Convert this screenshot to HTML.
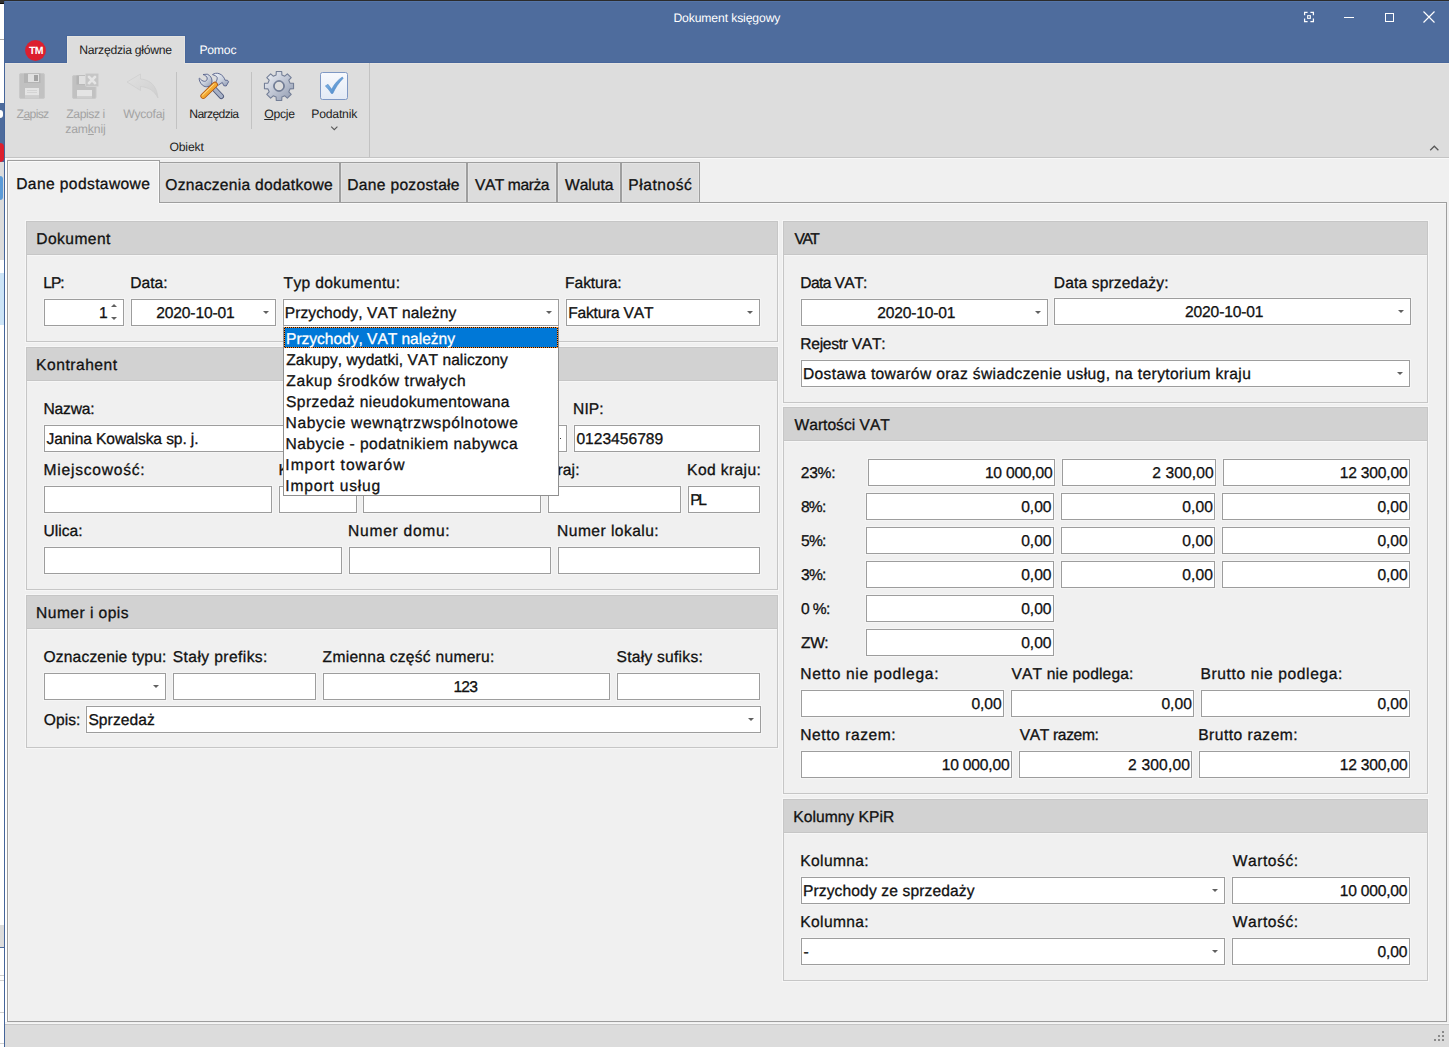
<!DOCTYPE html>
<html lang="pl">
<head>
<meta charset="utf-8">
<title>Dokument księgowy</title>
<style>
html,body{margin:0;padding:0;background:#fff}
body{width:1449px;height:1047px;overflow:hidden;position:relative;font-family:"Liberation Sans",sans-serif;font-kerning:none;text-rendering:geometricPrecision;color:#111;font-size:15.6px}
#app{position:absolute;left:0;top:0;width:1449px;height:1047px;overflow:hidden;background:#f0f0f0}
#app *{box-sizing:border-box}
.t{position:absolute;white-space:pre;line-height:1;display:block;-webkit-text-stroke:0.3px currentColor}
.abs{position:absolute}
/* background strip of the window behind */
#behind{position:absolute;left:0;top:0;width:4px;height:1047px;background:#fff}
#behind i{position:absolute;left:0;width:4px;display:block}
#topline{position:absolute;left:4px;top:0;width:1445px;height:1px;background:#2b2b2b;box-shadow:0 1px 0 #5575a8}
#winborder{position:absolute;left:4px;top:1px;width:1px;height:1046px;background:#45659a}
#title{position:absolute;left:4px;top:1px;width:1445px;height:62px;background:#4e6c9d;border-bottom:1px solid #47669b}
#ribbon{position:absolute;left:5px;top:63px;width:1444px;height:94px;background:#dddddd;border-top:1px solid #e6e4e1}
#ribbonline{position:absolute;left:5px;top:157px;width:1444px;height:2px;background:#c4c4c4;border-bottom:1px solid #f8f8f8}
#rtab{position:absolute;left:67px;top:36px;width:118px;height:28px;background:#dddddd;border:1px solid #e5e4e1;border-bottom:0;box-shadow:-1px -1px 0 #48679b,1px -1px 0 #48679b}
.vsep{position:absolute;width:1px;background:#c2c2c2}
#edgeL{position:absolute;left:5px;top:158px;width:2px;height:864px;background:#fff}
/* tab control */
#pane{position:absolute;left:7px;top:202px;width:1440px;height:820px;border:1px solid #9e9e9e;background:#f0f0f0;box-shadow:inset 1px 1px 0 #f9f9f9}
.tab{position:absolute;top:162px;height:40px;border:1px solid #9e9e9e;border-bottom:0;background:#dcdcdc;box-shadow:inset 1px 1px 0 #e3e3e3,inset -1px 0 0 #e3e3e3}
#tab0{left:7px;top:160px;width:153px;height:43px;background:#f0f0f0;border:1px solid #9e9e9e;border-bottom:0;position:absolute;box-shadow:inset 1px 1px 0 #fafafa,inset -1px 0 0 #fafafa}
/* panels */
.panel{position:absolute;border:1px solid #c6c6c6;background:#f0f0f0;box-shadow:0 0 0 1px #f6f6f6}
.panel header{position:absolute;left:0;top:0;right:0;height:33px;background:#d2d2d2;border-bottom:1px solid #c6c6c6;box-shadow:0 1px 0 #f6f6f6}
.in{position:absolute;background:#fff;border:1px solid #9d9d9d;box-shadow:0 0 0 1px #f5f5f5}
.arr{position:absolute;width:0;height:0;border-left:3px solid transparent;border-right:3px solid transparent;border-top:3px solid #606060}
.spu{position:absolute;width:0;height:0;border-left:3px solid transparent;border-right:3px solid transparent;border-bottom:3px solid #606060}
.spd{position:absolute;width:0;height:0;border-left:3px solid transparent;border-right:3px solid transparent;border-top:3px solid #606060}
.dd{position:absolute;background:#fff;border:1px solid #8f8f8f;border-top-color:#fff}
.dd .sel{position:absolute;left:0;top:0;width:274px;height:21px;background:#0078d7}
.dd .sel i{position:absolute;display:block}
.dd .sel .h{left:0;width:274px;height:1px;background:repeating-linear-gradient(90deg,#ff8a2a 0 1px,#101010 1px 2px)}
.dd .sel .v{top:0;width:1px;height:21px;background:repeating-linear-gradient(180deg,#ff8a2a 0 1px,#101010 1px 2px)}
#tab0::after{content:"";position:absolute;left:1px;right:0;bottom:-1px;height:1px;background:#f0f0f0}
#status{position:absolute;left:5px;top:1024px;width:1444px;height:23px;background:#dcdcdc;border-top:1px solid #c6c6c6}
#status i{position:absolute;width:2px;height:2px;background:#8a8a8a;display:block}
#statusline{position:absolute;left:5px;top:1023px;width:1444px;height:1px;background:#f7f7f7}
svg{position:absolute;overflow:visible}
</style>
</head>
<body>
<div id="app">
<div id="behind">
<i style="top:0;height:3px;background:#303030"></i><i style="top:3px;height:1px;background:#0a0a0a"></i>
<i style="top:39px;height:1px;background:#a8a8a8"></i>
<i style="top:103px;height:59px;background:#4d6b9c"></i>
<i style="top:110px;height:8px;background:#fff;border-radius:0 4px 4px 0;width:3px"></i>
<i style="top:143px;height:19px;background:#dc1f2e;border-radius:0 9px 9px 0;width:4px"></i>
<i style="top:162px;height:98px;background:#dcdcdc"></i>
<i style="top:176px;height:24px;background:#5b9bd8;border-radius:0 12px 12px 0;width:3px"></i>
<i style="top:273px;height:52px;background:#cce4f7"></i>
<i style="top:925px;height:22px;background:#dcdcdc"></i>
<i style="top:947px;height:1px;background:#4d6b9c"></i>
<i style="top:975px;height:1px;background:#d0d0d0"></i><i style="top:980px;height:1px;background:#d0d0d0"></i>
<i style="top:1012px;height:1px;background:#d0d0d0"></i><i style="top:1043px;height:1px;background:#d0d0d0"></i>
</div>
<div id="title"></div>
<div id="topline"></div>
<div id="winborder"></div>
<div id="ribbon"></div>
<div id="rtab"></div>
<div id="ribbonline"></div>
<div class="vsep" style="left:176px;top:72px;height:57px"></div>
<div class="vsep" style="left:251px;top:72px;height:57px"></div>
<div class="vsep" style="left:369px;top:63px;height:94px"></div>
<div id="edgeL"></div>
<!-- app logo -->
<svg style="left:25px;top:40px" width="21" height="21" viewBox="0 0 21 21"><circle cx="10.5" cy="10.5" r="10.4" fill="#dc1f2e"/></svg>
<!-- window buttons -->
<svg style="left:1300px;top:8px" width="140" height="20" viewBox="0 0 140 20" fill="none" stroke="#fff" stroke-width="1.2">
<path d="M4.600 7.300v-3h3M10.400 4.300h3v3M13.400 10.500v3h-3M7.600 13.500h-3v-3" stroke-width="1.250"/><rect x="7.650" y="7.650" width="2.700" height="2.700" stroke-width="1.050"/>
<path d="M44 9.500h10" stroke-width="1"/>
<rect x="85.500" y="5.500" width="8" height="8" stroke-width="1"/>
<path d="M123.5 3.500l11 11M134.500 3.500l-11 11" stroke-width="1.15"/>
</svg>
<!-- save (disabled) -->
<svg style="left:19px;top:73px" width="26" height="26" viewBox="0 0 26 26">
<rect x="0.500" y="0.500" width="25" height="25" rx="1.500" fill="#c1c1c1" stroke="#c9c9c9"/>
<rect x="5" y="0.500" width="16.500" height="9.500" fill="#b4b4b4"/>
<rect x="9" y="1" width="11" height="8" fill="#e0e0e0"/>
<rect x="15" y="2" width="4" height="6" fill="#a2a2a2"/>
<rect x="6" y="15" width="14" height="7.500" fill="#e4e4e4"/>
<rect x="6" y="22.500" width="14" height="3" fill="#cecece"/>
<path d="M8 17.500h10M8 19.500h10" stroke="#cfcfcf" stroke-width="0.800"/>
</svg>
<!-- save and close (disabled) -->
<svg style="left:72px;top:73px" width="27" height="26" viewBox="0 0 27 26">
<rect x="0.500" y="2.500" width="23.500" height="23" rx="1.500" fill="#c1c1c1" stroke="#c9c9c9"/>
<rect x="4.500" y="2.500" width="10" height="9" fill="#b4b4b4"/>
<rect x="7" y="3" width="7" height="8" fill="#e0e0e0"/>
<rect x="5" y="17" width="15" height="6.500" fill="#e4e4e4"/>
<rect x="5" y="23.500" width="15" height="2" fill="#cecece"/>
<rect x="13.500" y="0.500" width="13" height="13" rx="1" fill="#c6c6c6" stroke="#d3d3d3"/>
<path d="M17 3.900l6 6.200M23 3.900l-6 6.200" stroke="#e5e5e5" stroke-width="2.800" stroke-linecap="round"/>
</svg>
<!-- undo (disabled) -->
<svg style="left:126px;top:73px" width="33" height="26" viewBox="0 0 33 26">
<defs><linearGradient id="gu" x1="0" y1="0" x2="1" y2="1"><stop offset="0" stop-color="#e0e0e0"/><stop offset="1" stop-color="#cfcfcf"/></linearGradient></defs>
<path d="M1 9 L14.500 1 L14.500 6 C24 6.500 31 13 32 25 C28 17.500 23 14.500 14.500 13.500 L14.500 17.500 Z" fill="url(#gu)" stroke="#cdcdcd" stroke-width="0.700"/>
</svg>
<!-- tools -->
<svg style="left:198px;top:72px" width="33" height="28" viewBox="0 0 33 28">
<defs>
<linearGradient id="gm" x1="0" y1="0" x2="1" y2="1"><stop offset="0" stop-color="#f4f6fa"/><stop offset="0.55" stop-color="#c9d0dd"/><stop offset="1" stop-color="#8f9ab2"/></linearGradient>
<linearGradient id="go" x1="0" y1="0" x2="1" y2="1"><stop offset="0" stop-color="#ffe08f"/><stop offset="0.5" stop-color="#f5ab33"/><stop offset="1" stop-color="#e58a14"/></linearGradient>
</defs>
<!-- wrench handle -->
<path d="M15 15.500 L23.300 24.300" stroke="#4f5a7c" stroke-width="5.400" stroke-linecap="round"/>
<path d="M15 15.500 L23.300 24.300" stroke="#a7b1c6" stroke-width="3.600" stroke-linecap="round"/>
<!-- wrench head -->
<path d="M5 2.500 L9.300 2.200 C12.300 3.400 14 6 14 9 C14 11.800 12.800 13.600 11.300 14.200 C9.500 15 7.500 14.900 6 14.200 C3.500 13 1.500 10 1 6.500 L1.600 6.200 C3 8 4.500 9.200 6.500 9.300 C8.300 9.300 9.400 7.800 9.200 6 C9 4.500 7.200 3.300 5 2.500 Z" fill="url(#gm)" stroke="#56618a" stroke-width="0.900" stroke-linejoin="round"/>
<!-- hammer head -->
<path d="M14.500 2.600 C16.300 1.200 18.800 0.900 21 1.600 C24.300 2.700 26.300 5.500 27 8.200 L29.500 8.300 L30.600 9.800 L28.200 14 L25.800 13.700 L24.300 10.500 L20.200 13.200 L17.600 10.600 C18.600 9 19.400 7.200 19.200 5.600 C18.600 4 16.600 3.300 14.500 2.600 Z" fill="url(#gm)" stroke="#56618a" stroke-width="0.900" stroke-linejoin="round"/>
<!-- hammer handle -->
<path d="M17 12.700 L5.300 24" stroke="#b0560f" stroke-width="5.800" stroke-linecap="round"/>
<path d="M17 12.700 L5.300 24" stroke="url(#go)" stroke-width="4.200" stroke-linecap="round"/>
<path d="M15.800 12.300 L4.600 23.100" stroke="#ffe9ad" stroke-width="1" stroke-linecap="round" opacity="0.700"/>
</svg>
<!-- gear -->
<svg style="left:263px;top:70px" width="32" height="32" viewBox="-16 -16 32 32">
<defs><linearGradient id="gg" x1="0" y1="0" x2="1" y2="1"><stop offset="0" stop-color="#f3f5f9"/><stop offset="0.450" stop-color="#c5cbd8"/><stop offset="1" stop-color="#8e98ae"/></linearGradient></defs>
<path fill="url(#gg)" stroke="#737e96" stroke-width="1.100" stroke-linejoin="round" fill-rule="evenodd" d="M-2.88 -11.03 L-2.72 -14.55 L2.72 -14.55 L2.88 -11.03 L5.77 -9.83 L8.36 -12.21 L12.21 -8.36 L9.83 -5.77 L11.03 -2.88 L14.55 -2.72 L14.55 2.72 L11.03 2.88 L9.83 5.77 L12.21 8.36 L8.36 12.21 L5.77 9.83 L2.88 11.03 L2.72 14.55 L-2.72 14.55 L-2.88 11.03 L-5.77 9.83 L-8.36 12.21 L-12.21 8.36 L-9.83 5.77 L-11.03 2.88 L-14.55 2.72 L-14.55 -2.72 L-11.03 -2.88 L-9.83 -5.77 L-12.21 -8.36 L-8.36 -12.21 L-5.77 -9.83 Z M4.8 0 A4.8 4.8 0 1 0 -4.8 0 A4.8 4.8 0 1 0 4.8 0 Z"/>
<circle r="5.400" fill="none" stroke="#69748d" stroke-width="0.900"/>
</svg>
<!-- taxpayer check -->
<svg style="left:320px;top:72px" width="28" height="28" viewBox="0 0 28 28">
<defs><linearGradient id="gc" x1="0" y1="0" x2="0" y2="1"><stop offset="0" stop-color="#f7f9fd"/><stop offset="1" stop-color="#e3eaf5"/></linearGradient>
<linearGradient id="gk" x1="0" y1="0" x2="1" y2="1"><stop offset="0" stop-color="#8fc0ea"/><stop offset="1" stop-color="#3f7fc4"/></linearGradient></defs>
<rect x="0.500" y="0.500" width="27" height="27" rx="2" fill="url(#gc)" stroke="#7f98c4"/>
<path d="M5.300 14 L8 12.300 L11.700 17.300 C14.300 11.800 17.800 8 22.300 5 L23.200 6.300 C18.800 10.800 15.600 15.500 12.800 21.500 L11.300 21.500 C9.500 18.500 7.700 16.200 5.300 14 Z" fill="url(#gk)" stroke="#4a83c4" stroke-width="0.500"/>
</svg>
<!-- chevrons -->
<svg style="left:330px;top:125px" width="9" height="6" viewBox="0 0 9 6"><path d="M1.200 1.600l3.100 3L7.400 1.600" fill="none" stroke="#5a5a5a" stroke-width="1.150"/></svg>
<svg style="left:1429px;top:144px" width="11" height="8" viewBox="0 0 11 8"><path d="M1.200 6.300l4.100-4.100L9.400 6.300" fill="none" stroke="#585858" stroke-width="1.250"/></svg>

<main>
<div id="pane"></div>
<nav>
<div class="tab" style="left:158px;width:182px"></div>
<div class="tab" style="left:340px;width:127px"></div>
<div class="tab" style="left:467px;width:90px"></div>
<div class="tab" style="left:557px;width:64px"></div>
<div class="tab" style="left:621px;width:79px"></div>
<div id="tab0"></div>
</nav>
<section class="panel" style="left:26px;top:221px;width:752px;height:121px"><header></header></section>
<span class="t" style="left:36.32px;top:232px;letter-spacing:0.428px;">Dokument</span>
<section class="panel" style="left:26px;top:347px;width:752px;height:243px"><header></header></section>
<span class="t" style="left:36.12px;top:358px;letter-spacing:0.519px;">Kontrahent</span>
<section class="panel" style="left:26px;top:595px;width:752px;height:153px"><header></header></section>
<span class="t" style="left:36.12px;top:606px;letter-spacing:0.444px;">Numer i opis</span>
<section class="panel" style="left:783px;top:221px;width:645px;height:182px"><header></header></section>
<span class="t" style="left:794.53px;top:232px;letter-spacing:-2.506px;">VAT</span>
<section class="panel" style="left:783px;top:407px;width:645px;height:387px"><header></header></section>
<span class="t" style="left:794.53px;top:418px;">Wartości VAT</span>
<section class="panel" style="left:783px;top:799px;width:645px;height:182px"><header></header></section>
<span class="t" style="left:793.32px;top:810px;letter-spacing:0.030px;">Kolumny KPiR</span>
<div class="in" style="left:44px;top:299px;width:80px;height:27px"></div>
<div class="in" style="left:131px;top:299px;width:145px;height:27px"></div>
<div class="in" style="left:283px;top:299px;width:276px;height:27px"></div>
<div class="in" style="left:566px;top:299px;width:194px;height:27px"></div>
<div class="in" style="left:44px;top:425px;width:523px;height:27px"></div>
<div class="in" style="left:574px;top:425px;width:186px;height:27px"></div>
<div class="in" style="left:44px;top:486px;width:228px;height:27px"></div>
<div class="in" style="left:279px;top:486px;width:78px;height:27px"></div>
<div class="in" style="left:363px;top:486px;width:178px;height:27px"></div>
<div class="in" style="left:548px;top:486px;width:133px;height:27px"></div>
<div class="in" style="left:688px;top:486px;width:72px;height:27px"></div>
<div class="in" style="left:44px;top:547px;width:298px;height:27px"></div>
<div class="in" style="left:349px;top:547px;width:202px;height:27px"></div>
<div class="in" style="left:558px;top:547px;width:202px;height:27px"></div>
<div class="in" style="left:44px;top:673px;width:122px;height:27px"></div>
<div class="in" style="left:173px;top:673px;width:143px;height:27px"></div>
<div class="in" style="left:323px;top:673px;width:287px;height:27px"></div>
<div class="in" style="left:617px;top:673px;width:143px;height:27px"></div>
<div class="in" style="left:86px;top:706px;width:675px;height:27px"></div>
<div class="in" style="left:801px;top:299px;width:247px;height:27px"></div>
<div class="in" style="left:1054px;top:298px;width:357px;height:27px"></div>
<div class="in" style="left:801px;top:360px;width:609px;height:27px"></div>
<div class="in" style="left:868px;top:459px;width:187px;height:27px"></div>
<div class="in" style="left:1062px;top:459px;width:154px;height:27px"></div>
<div class="in" style="left:1223px;top:459px;width:187px;height:27px"></div>
<div class="in" style="left:866px;top:493px;width:188px;height:27px"></div>
<div class="in" style="left:1061px;top:493px;width:154px;height:27px"></div>
<div class="in" style="left:1222px;top:493px;width:188px;height:27px"></div>
<div class="in" style="left:866px;top:527px;width:188px;height:27px"></div>
<div class="in" style="left:1061px;top:527px;width:154px;height:27px"></div>
<div class="in" style="left:1222px;top:527px;width:188px;height:27px"></div>
<div class="in" style="left:866px;top:561px;width:188px;height:27px"></div>
<div class="in" style="left:1061px;top:561px;width:154px;height:27px"></div>
<div class="in" style="left:1222px;top:561px;width:188px;height:27px"></div>
<div class="in" style="left:866px;top:595px;width:188px;height:27px"></div>
<div class="in" style="left:866px;top:629px;width:188px;height:27px"></div>
<div class="in" style="left:801px;top:690px;width:203px;height:27px"></div>
<div class="in" style="left:1011px;top:690px;width:183px;height:27px"></div>
<div class="in" style="left:1201px;top:690px;width:209px;height:27px"></div>
<div class="in" style="left:801px;top:751px;width:211px;height:27px"></div>
<div class="in" style="left:1019px;top:751px;width:173px;height:27px"></div>
<div class="in" style="left:1199px;top:751px;width:211px;height:27px"></div>
<div class="in" style="left:801px;top:877px;width:424px;height:27px"></div>
<div class="in" style="left:1232px;top:877px;width:178px;height:27px"></div>
<div class="in" style="left:801px;top:938px;width:424px;height:27px"></div>
<div class="in" style="left:1232px;top:938px;width:178px;height:27px"></div>
<span class="t" style="left:43.32px;top:276px;letter-spacing:-1.056px;">LP:</span>
<span class="t" style="left:130.32px;top:276px;letter-spacing:-0.021px;">Data:</span>
<span class="t" style="left:283.55px;top:276px;letter-spacing:0.355px;">Typ dokumentu:</span>
<span class="t" style="left:565.12px;top:276px;letter-spacing:-0.088px;">Faktura:</span>
<span class="t" style="left:43.52px;top:402px;letter-spacing:-0.183px;">Nazwa:</span>
<span class="t" style="left:573.12px;top:402px;letter-spacing:0.022px;">NIP:</span>
<span class="t" style="left:43.52px;top:463px;letter-spacing:0.759px;">Miejscowość:</span>
<span class="t" style="left:278.52px;top:463px;">Kod pocztowy:</span>
<span class="t" style="left:362.52px;top:463px;">Poczta:</span>
<span class="t" style="left:547.12px;top:463px;letter-spacing:0.082px;">Kraj:</span>
<span class="t" style="left:687.12px;top:463px;letter-spacing:0.385px;">Kod kraju:</span>
<span class="t" style="left:43.60px;top:524px;letter-spacing:-0.016px;">Ulica:</span>
<span class="t" style="left:348.12px;top:524px;letter-spacing:0.711px;">Numer domu:</span>
<span class="t" style="left:557.12px;top:524px;letter-spacing:0.447px;">Numer lokalu:</span>
<span class="t" style="left:43.56px;top:650px;letter-spacing:0.155px;">Oznaczenie typu:</span>
<span class="t" style="left:172.79px;top:650px;letter-spacing:0.411px;">Stały prefiks:</span>
<span class="t" style="left:322.60px;top:650px;letter-spacing:0.268px;">Zmienna część numeru:</span>
<span class="t" style="left:616.49px;top:650px;letter-spacing:0.259px;">Stały sufiks:</span>
<span class="t" style="left:43.76px;top:713px;letter-spacing:0.038px;">Opis:</span>
<span class="t" style="left:800.32px;top:276px;letter-spacing:-0.607px;">Data VAT:</span>
<span class="t" style="left:1053.72px;top:276px;letter-spacing:0.149px;">Data sprzedaży:</span>
<span class="t" style="left:800.32px;top:337px;letter-spacing:-0.292px;">Rejestr VAT:</span>
<span class="t" style="left:800.82px;top:466px;letter-spacing:-0.283px;">23%:</span>
<span class="t" style="left:800.92px;top:500px;letter-spacing:-0.739px;">8%:</span>
<span class="t" style="left:800.98px;top:534px;letter-spacing:-0.766px;">5%:</span>
<span class="t" style="left:801.01px;top:568px;letter-spacing:-0.781px;">3%:</span>
<span class="t" style="left:800.99px;top:602px;letter-spacing:-0.627px;">0 %:</span>
<span class="t" style="left:801.10px;top:636px;letter-spacing:-0.484px;">ZW:</span>
<span class="t" style="left:800.32px;top:667px;letter-spacing:0.681px;">Netto nie podlega:</span>
<span class="t" style="left:1011.53px;top:667px;letter-spacing:0.147px;">VAT nie podlega:</span>
<span class="t" style="left:1200.52px;top:667px;letter-spacing:0.608px;">Brutto nie podlega:</span>
<span class="t" style="left:800.32px;top:728px;letter-spacing:0.546px;">Netto razem:</span>
<span class="t" style="left:1019.73px;top:728px;letter-spacing:-0.351px;">VAT razem:</span>
<span class="t" style="left:1198.22px;top:728px;letter-spacing:0.481px;">Brutto razem:</span>
<span class="t" style="left:800.32px;top:854px;letter-spacing:0.343px;">Kolumna:</span>
<span class="t" style="left:1232.63px;top:854px;letter-spacing:0.579px;">Wartość:</span>
<span class="t" style="left:800.32px;top:915px;letter-spacing:0.343px;">Kolumna:</span>
<span class="t" style="left:1232.63px;top:915px;letter-spacing:0.579px;">Wartość:</span>
<span class="t" style="left:99.11px;top:306px;">1</span>
<span class="t" style="left:156.22px;top:306px;letter-spacing:-0.139px;">2020-10-01</span>
<span class="t" style="left:284.72px;top:306px;letter-spacing:0.080px;">Przychody, VAT należny</span>
<span class="t" style="left:568.32px;top:306px;letter-spacing:-0.242px;">Faktura VAT</span>
<span class="t" style="left:46.56px;top:432px;letter-spacing:-0.109px;">Janina Kowalska sp. j.</span>
<span class="t" style="left:576.39px;top:432px;letter-spacing:0.010px;">0123456789</span>
<span class="t" style="left:690.22px;top:493px;letter-spacing:-2.483px;">PL</span>
<span class="t" style="left:453.41px;top:680px;letter-spacing:-0.777px;">123</span>
<span class="t" style="left:88.39px;top:713px;letter-spacing:0.083px;">Sprzedaż</span>
<span class="t" style="left:877.32px;top:306px;letter-spacing:-0.183px;">2020-10-01</span>
<span class="t" style="left:1185.02px;top:305px;letter-spacing:-0.139px;">2020-10-01</span>
<span class="t" style="left:802.92px;top:367px;letter-spacing:0.371px;">Dostawa towarów oraz świadczenie usług, na terytorium kraju</span>
<span class="t" style="left:984.91px;top:466px;letter-spacing:-0.213px;">10 000,00</span>
<span class="t" style="left:1152.22px;top:466px;letter-spacing:0.096px;">2 300,00</span>
<span class="t" style="left:1339.71px;top:466px;letter-spacing:-0.175px;">12 300,00</span>
<span class="t" style="left:1021.19px;top:500px;letter-spacing:-0.014px;">0,00</span>
<span class="t" style="left:1182.19px;top:500px;letter-spacing:0.119px;">0,00</span>
<span class="t" style="left:1377.39px;top:500px;letter-spacing:-0.014px;">0,00</span>
<span class="t" style="left:1021.19px;top:534px;letter-spacing:-0.014px;">0,00</span>
<span class="t" style="left:1182.19px;top:534px;letter-spacing:0.119px;">0,00</span>
<span class="t" style="left:1377.39px;top:534px;letter-spacing:-0.014px;">0,00</span>
<span class="t" style="left:1021.19px;top:568px;letter-spacing:-0.014px;">0,00</span>
<span class="t" style="left:1182.19px;top:568px;letter-spacing:0.119px;">0,00</span>
<span class="t" style="left:1377.39px;top:568px;letter-spacing:-0.014px;">0,00</span>
<span class="t" style="left:1021.19px;top:602px;letter-spacing:-0.014px;">0,00</span>
<span class="t" style="left:1021.19px;top:636px;letter-spacing:-0.014px;">0,00</span>
<span class="t" style="left:971.39px;top:697px;letter-spacing:-0.048px;">0,00</span>
<span class="t" style="left:1161.39px;top:697px;letter-spacing:0.052px;">0,00</span>
<span class="t" style="left:1377.39px;top:697px;letter-spacing:-0.014px;">0,00</span>
<span class="t" style="left:941.71px;top:758px;letter-spacing:-0.175px;">10 000,00</span>
<span class="t" style="left:1128.12px;top:758px;letter-spacing:0.153px;">2 300,00</span>
<span class="t" style="left:1339.71px;top:758px;letter-spacing:-0.175px;">12 300,00</span>
<span class="t" style="left:802.92px;top:884px;letter-spacing:0.126px;">Przychody ze sprzedaży</span>
<span class="t" style="left:803.51px;top:945px;">-</span>
<span class="t" style="left:1339.71px;top:884px;letter-spacing:-0.200px;">10 000,00</span>
<span class="t" style="left:1377.49px;top:945px;letter-spacing:-0.114px;">0,00</span>
<i class="arr" style="left:263px;top:311px"></i>
<i class="arr" style="left:546px;top:311px"></i>
<i class="arr" style="left:747px;top:311px"></i>
<i class="arr" style="left:153px;top:685px"></i>
<i class="arr" style="left:748px;top:718px"></i>
<i class="arr" style="left:1035px;top:311px"></i>
<i class="arr" style="left:1398px;top:310px"></i>
<i class="arr" style="left:1397px;top:372px"></i>
<i class="arr" style="left:1212px;top:889px"></i>
<i class="arr" style="left:1212px;top:950px"></i>
<i class="spu" style="left:111px;top:304px"></i><i class="spd" style="left:111px;top:317px"></i>
<i style="position:absolute;left:560px;top:438px;width:1px;height:1px;background:#333"></i>
<div class="dd" style="left:283px;top:326px;width:276px;height:170px"><div class="sel"><i class="h" style="top:0"></i><i class="h" style="top:20px"></i><i class="v" style="left:0"></i><i class="v" style="left:273px"></i></div></div>
<span class="t" style="left:286.12px;top:332px;letter-spacing:-0.049px;color:#fff;">Przychody, VAT należny</span>
<span class="t" style="left:286.30px;top:353px;letter-spacing:0.048px;">Zakupy, wydatki, VAT naliczony</span>
<span class="t" style="left:286.30px;top:374px;letter-spacing:0.580px;">Zakup środków trwałych</span>
<span class="t" style="left:286.09px;top:395px;letter-spacing:0.372px;">Sprzedaż nieudokumentowana</span>
<span class="t" style="left:285.52px;top:416px;letter-spacing:0.604px;">Nabycie wewnątrzwspólnotowe</span>
<span class="t" style="left:285.52px;top:437px;letter-spacing:0.426px;">Nabycie - podatnikiem nabywca</span>
<span class="t" style="left:285.36px;top:458px;letter-spacing:0.959px;">Import towarów</span>
<span class="t" style="left:285.36px;top:479px;letter-spacing:0.828px;">Import usług</span>
</main>
<div id="statusline"></div>
<footer id="status"><i style="left:1437px;top:6px"></i><i style="left:1433px;top:10px"></i><i style="left:1437px;top:10px"></i><i style="left:1429px;top:14px"></i><i style="left:1433px;top:14px"></i><i style="left:1437px;top:14px"></i></footer>
<span class="t" style="left:673.40px;top:12px;font-size:12.2px;letter-spacing:-0.128px;color:#fff;-webkit-text-stroke:0;">Dokument księgowy</span>
<span class="t" style="left:79.30px;top:44px;font-size:12.2px;letter-spacing:-0.282px;color:#222;-webkit-text-stroke:0;">Narzędzia główne</span>
<span class="t" style="left:199.40px;top:44px;font-size:12.2px;letter-spacing:-0.212px;color:#fff;-webkit-text-stroke:0;">Pomoc</span>
<span class="t" style="left:16.61px;top:108px;font-size:12.2px;letter-spacing:-0.668px;color:#a3a3a3;-webkit-text-stroke:0;">Z<u>a</u>pisz</span>
<span class="t" style="left:66.31px;top:108px;font-size:12.2px;letter-spacing:-0.432px;color:#a3a3a3;-webkit-text-stroke:0;">Zapisz i</span>
<span class="t" style="left:65.31px;top:123px;font-size:12.2px;letter-spacing:-0.156px;color:#a3a3a3;-webkit-text-stroke:0;">zam<u>k</u>nij</span>
<span class="t" style="left:123.15px;top:108px;font-size:12.2px;letter-spacing:-0.268px;color:#a3a3a3;-webkit-text-stroke:0;">Wycofaj</span>
<span class="t" style="left:189.30px;top:108px;font-size:12.2px;letter-spacing:-0.640px;color:#222;-webkit-text-stroke:0;">Narzędzia</span>
<span class="t" style="left:264.22px;top:108px;font-size:12.2px;letter-spacing:-0.263px;color:#222;-webkit-text-stroke:0;"><u>O</u>pcje</span>
<span class="t" style="left:311.20px;top:108px;font-size:12.2px;letter-spacing:-0.185px;color:#222;-webkit-text-stroke:0;">Podatnik</span>
<span class="t" style="left:169.42px;top:141px;font-size:12.2px;letter-spacing:-0.158px;color:#222;-webkit-text-stroke:0;">Obiekt</span>
<span class="t" style="left:16.22px;top:177px;letter-spacing:0.387px;">Dane podstawowe</span>
<span class="t" style="left:165.26px;top:178px;letter-spacing:0.277px;">Oznaczenia dodatkowe</span>
<span class="t" style="left:347.32px;top:178px;letter-spacing:0.297px;">Dane pozostałe</span>
<span class="t" style="left:474.93px;top:178px;letter-spacing:-0.431px;">VAT marża</span>
<span class="t" style="left:565.03px;top:178px;letter-spacing:-0.037px;">Waluta</span>
<span class="t" style="left:628.22px;top:178px;letter-spacing:0.551px;">Płatność</span>
<span class="t" style="left:29.08px;top:46px;font-size:10.5px;letter-spacing:-0.840px;color:#fff;font-weight:bold;-webkit-text-stroke:0;">TM</span>
</div>
</body>
</html>
